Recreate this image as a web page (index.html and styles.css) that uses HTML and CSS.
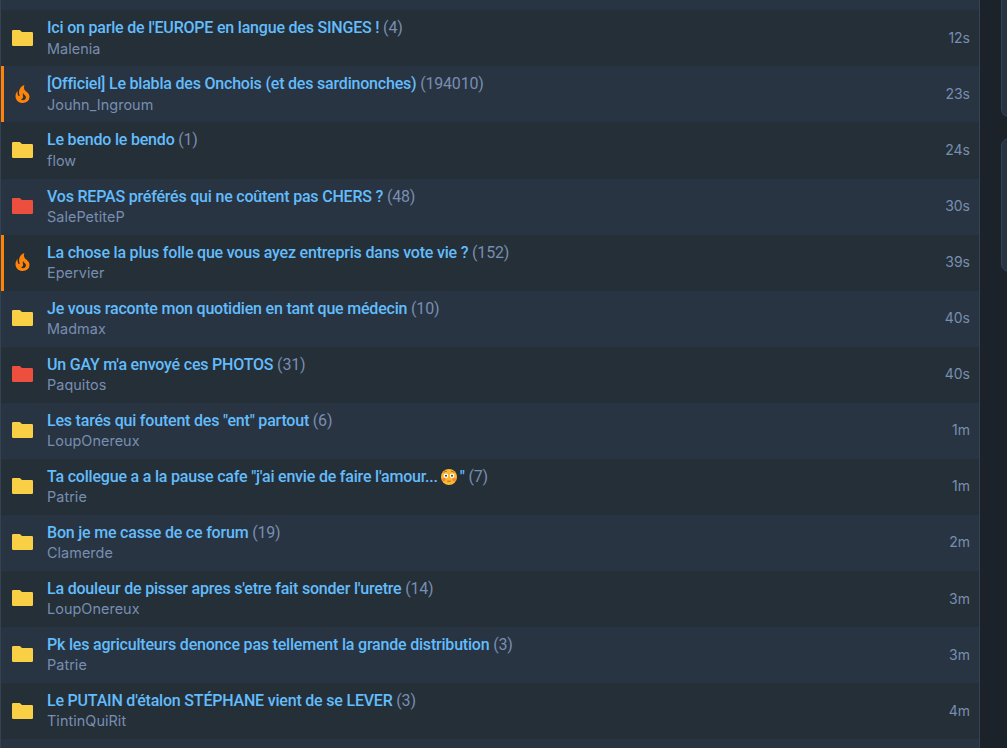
FILE: index.html
```
<!DOCTYPE html>
<html lang="fr">
<head>
  <meta charset="UTF-8" />
  <meta name="viewport" content="width=device-width, initial-scale=1.0" />
  <title>Forum</title>
  <link rel="stylesheet" href="styles.css">
</head>
<body>
  <svg class="sprite" aria-hidden="true">
    <symbol id="folder" viewBox="0 0 21 16">
      <path d="M1.2 0h6.6L10 2h9.8Q21 2 21 3.2v11.6q0 1.2-1.2 1.2H1.2Q0 16 0 14.8V1.2Q0 0 1.2 0z" />
    </symbol>
    <symbol id="fire" viewBox="0 0 24 24">
      <path d="M17.66 11.2c-.23-.3-.51-.56-.77-.82-.67-.6-1.43-1.03-2.07-1.66C13.33 7.26 13 4.85 13.95 3c-.95.23-1.78.75-2.49 1.32-2.59 2.08-3.61 5.75-2.39 8.9.04.1.08.2.08.33 0 .22-.15.42-.35.5-.23.1-.47.04-.66-.12a.58.58 0 0 1-.14-.17c-1.13-1.43-1.31-3.48-.55-5.12C5.78 10 4.87 12.3 5 14.47c.06.5.12 1 .29 1.5.14.6.41 1.2.71 1.73 1.08 1.73 2.95 2.97 4.96 3.22 2.14.27 4.43-.12 6.07-1.6 1.83-1.66 2.47-4.32 1.53-6.6l-.13-.26c-.21-.46-.77-1.26-.77-1.26m-3.16 6.3c-.28.24-.74.5-1.1.6-1.12.4-2.24-.16-2.9-.82 1.19-.28 1.9-1.16 2.11-2.05.17-.8-.15-1.46-.28-2.23-.12-.74-.1-1.37.17-2.06.19.38.39.76.63 1.06.77 1 1.98 1.44 2.24 2.8.04.14.06.28.06.43.03.82-.33 1.72-.93 2.27z" />
    </symbol>
  </svg>

  <div class="page">
    <main class="topics">
      <div class="topic"><svg class="icon"><use href="#folder" /></svg><div class="info"><div class="subject"><a class="title">Ici on parle de l'EUROPE en langue des SINGES !</a> <span class="count">(4)</span></div><div class="author">Malenia</div></div><time class="date">12s</time></div>
      <div class="topic hot"><svg class="icon"><use href="#fire" /></svg><div class="info"><div class="subject"><a class="title">[Officiel] Le blabla des Onchois (et des sardinonches)</a> <span class="count">(194010)</span></div><div class="author">Jouhn_Ingroum</div></div><time class="date">23s</time></div>
      <div class="topic"><svg class="icon"><use href="#folder" /></svg><div class="info"><div class="subject"><a class="title">Le bendo le bendo</a> <span class="count">(1)</span></div><div class="author">flow</div></div><time class="date">24s</time></div>
      <div class="topic"><svg class="icon red"><use href="#folder" /></svg><div class="info"><div class="subject"><a class="title">Vos REPAS préférés qui ne coûtent pas CHERS ?</a> <span class="count">(48)</span></div><div class="author">SalePetiteP</div></div><time class="date">30s</time></div>
      <div class="topic hot"><svg class="icon"><use href="#fire" /></svg><div class="info"><div class="subject"><a class="title">La chose la plus folle que vous ayez entrepris dans vote vie ?</a> <span class="count">(152)</span></div><div class="author">Epervier</div></div><time class="date">39s</time></div>
      <div class="topic"><svg class="icon"><use href="#folder" /></svg><div class="info"><div class="subject"><a class="title">Je vous raconte mon quotidien en tant que médecin</a> <span class="count">(10)</span></div><div class="author">Madmax</div></div><time class="date">40s</time></div>
      <div class="topic"><svg class="icon red"><use href="#folder" /></svg><div class="info"><div class="subject"><a class="title">Un GAY m'a envoyé ces PHOTOS</a> <span class="count">(31)</span></div><div class="author">Paquitos</div></div><time class="date">40s</time></div>
      <div class="topic"><svg class="icon"><use href="#folder" /></svg><div class="info"><div class="subject"><a class="title">Les tarés qui foutent des "ent" partout</a> <span class="count">(6)</span></div><div class="author">LoupOnereux</div></div><time class="date">1m</time></div>
      <div class="topic"><svg class="icon"><use href="#folder" /></svg><div class="info"><div class="subject"><a class="title">Ta collegue a a la pause cafe "j'ai envie de faire l'amour...<svg class="emoji" viewBox="0 0 16 16"><circle cx="8" cy="8" r="8" fill="#fdb92e" /><circle cx="2.9" cy="10.6" r="1.8" fill="#f98237" /><circle cx="13.1" cy="10.6" r="1.8" fill="#f98237" /><circle cx="4.9" cy="6.7" r="2.3" fill="#fff" /><circle cx="11.1" cy="6.7" r="2.3" fill="#fff" /><circle cx="5" cy="6.8" r="1" fill="#473028" /><circle cx="11" cy="6.8" r="1" fill="#473028" /><path d="M2.8 3.4Q4 2.2 5.8 2.2M10.2 2.2q1.8 0 3 1.2M6.2 12.2h3.6" fill="none" stroke="#8a5424" stroke-width=".8" /></svg>"</a> <span class="count">(7)</span></div><div class="author">Patrie</div></div><time class="date">1m</time></div>
      <div class="topic"><svg class="icon"><use href="#folder" /></svg><div class="info"><div class="subject"><a class="title">Bon je me casse de ce forum</a> <span class="count">(19)</span></div><div class="author">Clamerde</div></div><time class="date">2m</time></div>
      <div class="topic"><svg class="icon"><use href="#folder" /></svg><div class="info"><div class="subject"><a class="title">La douleur de pisser apres s'etre fait sonder l'uretre</a> <span class="count">(14)</span></div><div class="author">LoupOnereux</div></div><time class="date">3m</time></div>
      <div class="topic"><svg class="icon"><use href="#folder" /></svg><div class="info"><div class="subject"><a class="title">Pk les agriculteurs denonce pas tellement la grande distribution</a> <span class="count">(3)</span></div><div class="author">Patrie</div></div><time class="date">3m</time></div>
      <div class="topic"><svg class="icon"><use href="#folder" /></svg><div class="info"><div class="subject"><a class="title">Le PUTAIN d'étalon STÉPHANE vient de se LEVER</a> <span class="count">(3)</span></div><div class="author">TintinQuiRit</div></div><time class="date">4m</time></div>
    </main>
    <aside class="sidebar">
      <div class="card card-top"></div>
      <div class="card"></div>
    </aside>
  </div>
</body>
</html>
```
FILE: styles.css
```
* {
  box-sizing: border-box;
}

body {
  margin: 0;
  background: #1b222a;
  font-family: Roboto, sans-serif;
  color: #788eb0;
  overflow: hidden;
}

.sprite {
  display: none;
}

.page {
  display: flex;
  height: 748px;
}

.topics {
  width: 980px;
  padding-top: 10.3px;
  background: #283442;
  border-left: 1px solid #344253;
  border-right: 1px solid #344253;
}

.topic {
  display: flex;
  align-items: center;
  height: 56.08px;
  padding: 0 9px 0 11px;
  background: #283442;
}

.topic:nth-child(odd) {
  background: #252f38;
}

.topic.hot {
  border-left: 3px solid #ff8307;
  padding-left: 6px;
}

.icon {
  flex: none;
  width: 21px;
  height: 16px;
  margin: 0 14px 1.56px 0;
  fill: #f9cf46;
}

.icon.red {
  fill: #ed4f3f;
}

.hot .icon {
  width: 25px;
  height: 24px;
  margin-right: 12px;
  fill: #ff8307;
}

.info {
  flex: 1;
  padding-bottom: 0.6px;
}

.subject {
  font-size: 16px;
  line-height: 20.6px;
  letter-spacing: -0.2px;
  padding-top: 0.74px;
  margin-bottom: -0.34px;
}

.title {
  color: #63bcfb;
  font-weight: 500;
}

.author {
  font-family: Inter, sans-serif;
  font-size: 14.4px;
  line-height: 20px;
  letter-spacing: 0.06px;
}

.date {
  font-family: Inter, sans-serif;
  font-size: 14px;
  padding-bottom: 2.1px;
}

.emoji {
  width: 16px;
  height: 16px;
  margin: 0 3px;
  vertical-align: -3px;
}

.sidebar {
  flex: 1;
  padding-left: 21px;
  overflow: hidden;
}

.card {
  width: 300px;
  height: 134px;
  background: #283442;
  border: 1px solid #344253;
  border-radius: 8px;
}

.card-top {
  height: 117px;
  margin-bottom: 21px;
  border-top: 0;
  border-radius: 0 0 8px 8px;
}
```
